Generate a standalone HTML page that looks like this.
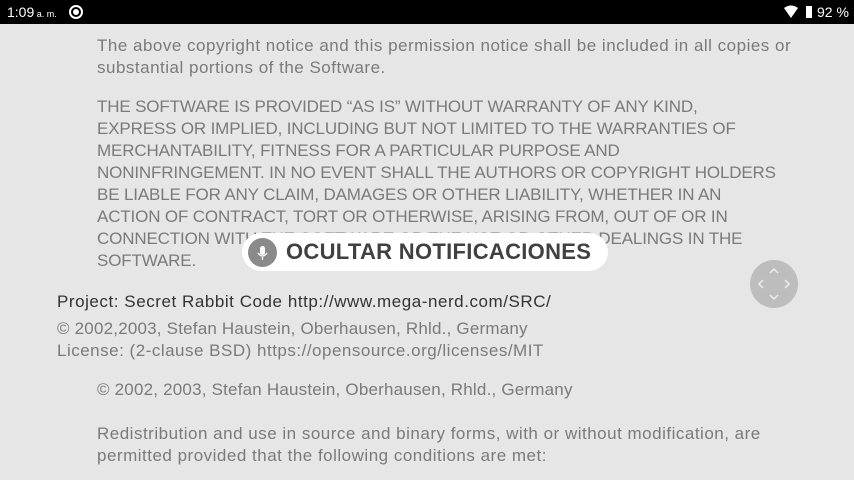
<!DOCTYPE html>
<html><head><meta charset="utf-8"><style>
body{margin:0;width:854px;height:480px;overflow:hidden;background:#e6e6e6;font-family:"Liberation Sans",sans-serif;position:relative}
.sb{position:absolute;left:0;top:0;width:854px;height:24px;background:#000;color:#fff;font-size:14px}
.l{position:absolute;white-space:nowrap;font-size:17px;color:#7a7a7a;letter-spacing:0.5px}
.u{letter-spacing:-0.15px}
.d{color:#333}
.pill{position:absolute;left:242px;top:233px;width:366px;height:38px;background:#fff;border-radius:19px}
.mic{position:absolute;left:248px;top:238px;width:29px;height:29px;border-radius:50%;background:#8a8a8a}
.pt{position:absolute;left:286px;top:239px;font-size:22px;font-weight:bold;color:#404040;white-space:nowrap;letter-spacing:0.3px}
.nav{position:absolute;left:750px;top:260px;width:48px;height:48px;border-radius:50%;background:#bdbdbd}
</style></head><body>
<div class="sb">
<span style="position:absolute;left:7px;top:4px">1:09<span style="font-size:9px"> a. m.</span></span>
<span style="position:absolute;left:69px;top:5px;width:10px;height:10px;border:2px solid #fff;border-radius:50%;"></span>
<span style="position:absolute;left:73px;top:9px;width:6px;height:6px;background:#fff;border-radius:50%"></span>
<svg style="position:absolute;left:784px;top:5px" width="32" height="15"><path d="M0 3 Q7 -2 14 3 L7 13Z" fill="#fff"/><rect x="22" y="1" width="6" height="12" fill="#fff"/></svg>
<span style="position:absolute;left:817px;top:4px">92 %</span>
</div>
<div class="l" style="left:97px;top:36px">The above copyright notice and this permission notice shall be included in all copies or</div>
<div class="l" style="left:97px;top:58px">substantial portions of the Software.</div>
<div class="l u" style="left:97px;top:97px">THE SOFTWARE IS PROVIDED “AS IS” WITHOUT WARRANTY OF ANY KIND,</div>
<div class="l u" style="left:97px;top:119px">EXPRESS OR IMPLIED, INCLUDING BUT NOT LIMITED TO THE WARRANTIES OF</div>
<div class="l u" style="left:97px;top:141px">MERCHANTABILITY, FITNESS FOR A PARTICULAR PURPOSE AND</div>
<div class="l u" style="left:97px;top:163px">NONINFRINGEMENT. IN NO EVENT SHALL THE AUTHORS OR COPYRIGHT HOLDERS</div>
<div class="l u" style="left:97px;top:185px">BE LIABLE FOR ANY CLAIM, DAMAGES OR OTHER LIABILITY, WHETHER IN AN</div>
<div class="l u" style="left:97px;top:207px">ACTION OF CONTRACT, TORT OR OTHERWISE, ARISING FROM, OUT OF OR IN</div>
<div class="l u" style="left:97px;top:229px">CONNECTION WITH THE SOFTWARE OR THE USE OR OTHER DEALINGS IN THE</div>
<div class="l u" style="left:97px;top:251px">SOFTWARE.</div>
<div class="pill"></div>
<div class="mic"><svg width="29" height="29"><rect x="12" y="8" width="5" height="9" rx="2.5" fill="#fff"/><path d="M10 15 Q14.5 21 19 15 M14.5 19 V22" stroke="#fff" stroke-width="1.3" fill="none"/></svg></div>
<div class="pt">OCULTAR NOTIFICACIONES</div>
<div class="nav"><svg width="48" height="48" fill="none" stroke="#eee" stroke-width="1.5"><path d="M20 13 L24 9 L28 13 M20 35 L24 39 L28 35 M13 20 L9 24 L13 28 M35 20 L39 24 L35 28"/></svg></div>
<div class="l d" style="left:57px;top:292px;letter-spacing:0.55px">Project: Secret Rabbit Code http://www.mega-nerd.com/SRC/</div>
<div class="l" style="left:57px;top:319px;letter-spacing:0.2px">© 2002,2003, Stefan Haustein, Oberhausen, Rhld., Germany</div>
<div class="l" style="left:57px;top:341px">License: (2-clause BSD) https://opensource.org/licenses/MIT</div>
<div class="l" style="left:97px;top:380px;letter-spacing:0.2px">© 2002, 2003, Stefan Haustein, Oberhausen, Rhld., Germany</div>
<div class="l" style="left:97px;top:424px">Redistribution and use in source and binary forms, with or without modification, are</div>
<div class="l" style="left:97px;top:446px">permitted provided that the following conditions are met:</div>
</body></html>
